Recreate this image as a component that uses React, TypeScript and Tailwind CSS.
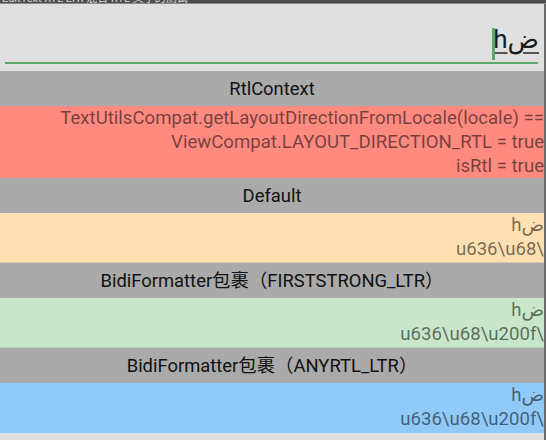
const font = { fontFamily: 'Roboto, "Noto Sans CJK SC", "DejaVu Sans", sans-serif' };

function Header({ title }: { title: string }) {
  return (
    <div className="h-[35px] bg-[#aaaaaa] flex items-center justify-center text-[18.4px] text-[#111]">
      {title}
    </div>
  );
}

function Rows({ bg, lines, h }: { bg: string; lines: string[]; h: string }) {
  return (
    <div className={`${bg} ${h} overflow-hidden flex flex-col items-end text-[18.6px] leading-[24px] text-black/55`}>
      {lines.map((line, i) => (
        <div key={i} dir="ltr" className="whitespace-nowrap">
          {line}
        </div>
      ))}
    </div>
  );
}

export default function App() {
  return (
    <div className="w-[546px] h-[440px] bg-[#e0e0e0] overflow-hidden flex flex-col" style={font}>
      <div className="h-[4px] bg-[#4e4e4e] overflow-hidden border-b border-[#8a8a8a]">
        <div className="text-[11px] leading-[11px] -mt-[7px] pl-[2px] text-[#d8d8d8] whitespace-nowrap">
          EditText RTL LTR 混合 RTL 文字的测试
        </div>
      </div>
      <div className="flex flex-1">
        <div className="flex-1 flex flex-col min-w-0">
          <div className="h-[67px] px-[5px] pt-[20px] flex flex-col">
            <div className="h-[38px] flex justify-end items-start">
              <div className="relative flex items-start">
                <div className="absolute left-[-1px] top-[4px] w-[3px] h-[32px] bg-[#5aa86b]" />
                <span
                  dir="ltr"
                  className="text-[26px] leading-[30px] text-[#1a1a1a] underline decoration-[#555] underline-offset-[4px] decoration-[1.5px]"
                >
                  hض
                </span>
              </div>
            </div>
            <div className="h-[2px] bg-[#5aa86b] mr-[1px]" />
          </div>
          <Header title="RtlContext" />
          <Rows
            bg="bg-[#ff8a80]"
            h="h-[72px]"
            lines={[
              'TextUtilsCompat.getLayoutDirectionFromLocale(locale) ==',
              'ViewCompat.LAYOUT_DIRECTION_RTL = true',
              'isRtl = true',
            ]}
          />
          <Header title="Default" />
          <Rows bg="bg-[#ffe0b2]" h="h-[49px]" lines={['hض', 'u636\\u68\\']} />
          <div className="h-px bg-[#d9c7ad]" />
          <Header title="BidiFormatter包裹（FIRSTSTRONG_LTR）" />
          <Rows bg="bg-[#c8e6c9]" h="h-[49px]" lines={['hض', 'u636\\u68\\u200f\\']} />
          <div className="h-px bg-[#b9cdb9]" />
          <Header title="BidiFormatter包裹（ANYRTL_LTR）" />
          <Rows bg="bg-[#90caf9]" h="h-[50px]" lines={['hض', 'u636\\u68\\u200f\\']} />
        </div>
        <div className="w-[2px] bg-[#6a6a6a]" />
      </div>
    </div>
  );
}
